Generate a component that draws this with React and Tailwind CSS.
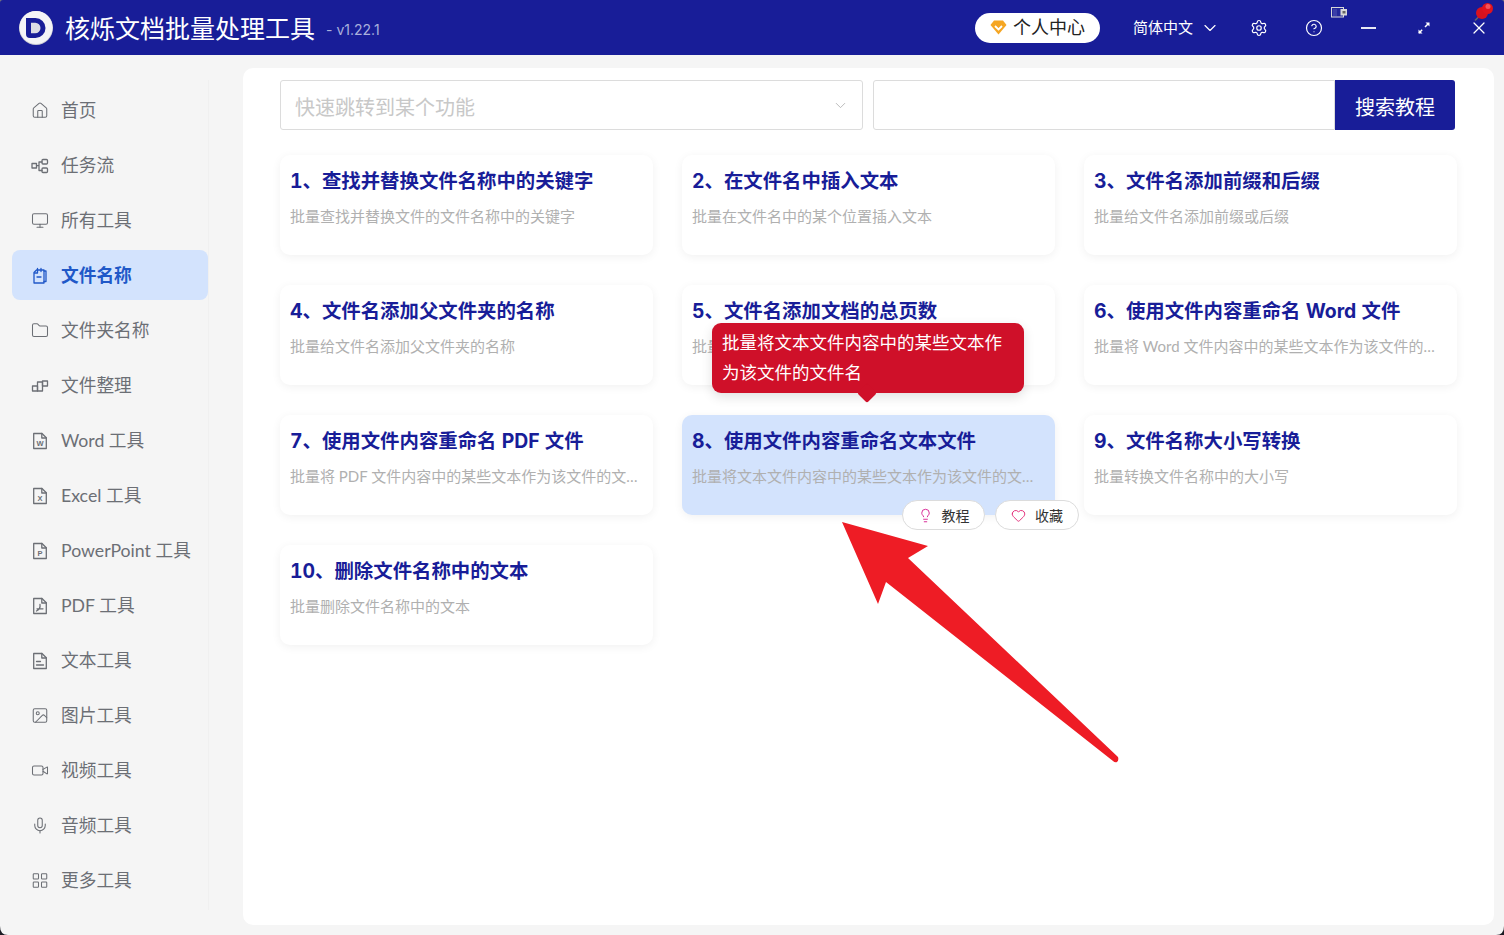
import React from "react";
import { Home, Monitor, Folder, Image as ImageIcon, Video, Mic, LayoutGrid, Settings, CircleHelp, X, ChevronDown, Heart, Lightbulb } from "lucide-react";

const Ic = ({ children }) => (
  <svg width="18" height="18" viewBox="0 0 18 18" fill="none" stroke="currentColor" strokeWidth="1.3" strokeLinejoin="round" strokeLinecap="round">{children}</svg>
);

const Flow = () => (
  <Ic>
    <rect x="1" y="6.500" width="4.500" height="4.500" />
    <rect x="11" y="2.500" width="5.500" height="4.500" rx="1" />
    <rect x="11" y="11" width="5.500" height="4.500" rx="1" />
    <path d="M5.500 8.700h2.500M8 5v8.500M8 5h3M8 13.500h3" />
  </Ic>
);
const Names = () => (
  <Ic>
    <path d="M5.500 3h7.500v13H3V5.500z" />
    <path d="M6.500 1.500v4.500h-3M10 1.500v3M13 4h2v10.500h-2M6 10h4" />
  </Ic>
);
const Arrange = () => (
  <Ic>
    <rect x="1.500" y="9" width="5" height="5" />
    <rect x="6.500" y="5" width="5" height="9" />
    <rect x="11.500" y="4" width="5" height="5" />
  </Ic>
);
const Doc = ({ children }) => (
  <Ic>
    <path d="M2.700 1.500h8.300l4.300 4.300v10.700h-12.600z" />
    <path d="M10.800 1.500v4.500h4.500" />
    {children}
  </Ic>
);
const Letter = ({ c }) => (
  <text x="9" y="13.700" textAnchor="middle" fontSize="7.500" fontWeight="700" fill="currentColor" stroke="none" fontFamily="Liberation Sans, sans-serif">{c}</text>
);

const lu = { size: 19, strokeWidth: 1.4 };
const nav = [
  ["首页", <Home {...lu} />],
  ["任务流", <Flow />],
  ["所有工具", <Monitor {...lu} />],
  ["文件名称", <Names />, true],
  ["文件夹名称", <Folder {...lu} />],
  ["文件整理", <Arrange />],
  ["Word 工具", <Doc><Letter c="W" /></Doc>],
  ["Excel 工具", <Doc><Letter c="X" /></Doc>],
  ["PowerPoint 工具", <Doc><Letter c="P" /></Doc>],
  ["PDF 工具", <Doc><path d="M9 7.500c.5 3-1.500 5.500-3.500 6.500M6 11.800h6" /></Doc>],
  ["文本工具", <Doc><path d="M5.500 9.500h4M5.500 13h7" /></Doc>],
  ["图片工具", <ImageIcon {...lu} />],
  ["视频工具", <Video {...lu} />],
  ["音频工具", <Mic {...lu} />],
  ["更多工具", <LayoutGrid {...lu} />],
];

const cards = [
  ["1、查找并替换文件名称中的关键字", "批量查找并替换文件的文件名称中的关键字"],
  ["2、在文件名中插入文本", "批量在文件名中的某个位置插入文本"],
  ["3、文件名添加前缀和后缀", "批量给文件名添加前缀或后缀"],
  ["4、文件名添加父文件夹的名称", "批量给文件名添加父文件夹的名称"],
  ["5、文件名添加文档的总页数", "批量给文件名添加文档的总页数"],
  ["6、使用文件内容重命名 Word 文件", "批量将 Word 文件内容中的某些文本作为该文件的文件名"],
  ["7、使用文件内容重命名 PDF 文件", "批量将 PDF 文件内容中的某些文本作为该文件的文件名"],
  ["8、使用文件内容重命名文本文件", "批量将文本文件内容中的某些文本作为该文件的文件名", true],
  ["9、文件名称大小写转换", "批量转换文件名称中的大小写"],
  ["10、删除文件名称中的文本", "批量删除文件名称中的文本"],
];

const Pill = ({ icon, label, w }) => (
  <div className={`flex h-[30px] ${w} items-center justify-center gap-[9px] rounded-full border border-[#dcdcdc] bg-white text-[14px] text-[#333]`}>
    {icon}
    <span>{label}</span>
  </div>
);

const Card = ({ title, desc, hot }) => (
  <div className={`relative h-[100px] min-w-0 rounded-[10px] pl-[10px] pr-[13px] pt-[11px] shadow-[0_2px_10px_rgba(0,0,0,0.06)] ${hot ? "bg-[#d3e3fd]" : "bg-white"}`}>
    <div className="h-[30px] truncate text-[19.4px] font-bold leading-[30px] text-[#181d98] tabular-nums">{title}</div>
    <div className="mt-[10px] truncate font-['Lato','Noto_Sans_CJK_SC',sans-serif] text-[15px] leading-[20px] text-[#b0b0b0]">{desc}</div>
    {hot && (
      <>
        <div className="absolute bottom-[122px] left-[30px] z-10 w-[312px] rounded-[9px] bg-[#cf1029] px-[10px] py-[5px] text-[17.5px] leading-[30px] text-white shadow-[0_4px_12px_rgba(0,0,0,0.12)]">
          批量将文本文件内容中的某些文本作为该文件的文件名
          <span className="absolute -bottom-[7px] left-[148px] h-[14px] w-[14px] rotate-45 rounded-[2px] bg-[#cf1029]" />
        </div>
        <div className="absolute left-[220px] top-[85px] z-10 flex gap-[10px]">
          <Pill w="w-[83px]" label="教程" icon={<Lightbulb size={15} strokeWidth={1.4} className="text-[#d4148c]" />} />
          <Pill w="w-[84px]" label="收藏" icon={<Heart size={15} strokeWidth={1.4} className="text-[#e0186c]" />} />
        </div>
      </>
    )}
  </div>
);

export default function App() {
  return (
    <div className="relative flex h-[935px] w-[1504px] flex-col overflow-hidden bg-[#f5f5f5] font-['Inter','Noto_Sans_CJK_SC',sans-serif]">
      <header className="flex h-[55px] shrink-0 items-center bg-[#181d98] text-white">
        <svg className="ml-[19px]" width="34" height="34" viewBox="0 0 34 34">
          <circle cx="17" cy="17" r="17" fill="#c9c9d2" />
          <circle cx="17" cy="16.500" r="16.500" fill="#f4f4f7" />
          <path d="M7 7h9.500a10 10 0 0 1 0 20h-5.500a4 4 0 0 1-4-4z" fill="#181d98" />
          <path d="M12 11.700h4.200a5.300 5.300 0 0 1 0 10.600h-4.200z" fill="#dcdce4" />
        </svg>
        <span className="ml-[12px] pt-[4px] text-[25px] leading-none">核烁文档批量处理工具</span>
        <span className="ml-[11px] mt-[3px] text-[14px] text-[#a9b0dc]">- v1.22.1</span>
        <div className="ml-auto flex items-center">
          <div className="mr-[1px] flex h-[30px] w-[125px] items-center justify-center gap-[6px] rounded-full bg-white text-[18px] text-[#222]">
            <svg width="17" height="15" viewBox="0 0 17 15"><path d="M4 .5h9l3.500 4.500-8 9.500-8-9.500z" fill="#f5a623" /><path d="M5 6l3.500 3.500L12 6" fill="none" stroke="#fff" strokeWidth="1.800" /></svg>
            <span>个人中心</span>
          </div>
          <span className="ml-[32px] pt-[1px] text-[15px]">简体中文</span>
          <ChevronDown size={20} strokeWidth={1.4} className="ml-[7px]" />
          <div className="ml-[11px] flex w-[55px] justify-center"><Settings size={18} strokeWidth={1.6} /></div>
          <div className="flex w-[55px] justify-center"><CircleHelp size={18} strokeWidth={1.6} /></div>
          <div className="flex w-[55px] justify-center"><span className="h-[2px] w-[15px] bg-[#e8e8f4]" /></div>
          <div className="flex w-[55px] justify-center">
            <svg width="16" height="16" viewBox="0 0 16 16" fill="none" stroke="#fff" strokeWidth="1.500"><path d="M3 13L13 3" strokeDasharray="4.500 4" /><path d="M9.500 2.500h4v4zM6.500 13.500h-4v-4z" fill="#fff" stroke="none" /></svg>
          </div>
          <div className="mr-[-2px] flex w-[55px] justify-center"><X size={20} strokeWidth={1.5} /></div>
        </div>
      </header>

      <div className="flex min-h-0 flex-1">
        <aside className="w-[209px] shrink-0 pl-[12px] pt-[25px]">
          <nav className="flex h-[830px] flex-col border-r border-[#f0f0f0] pt-[5px] font-['Lato','Noto_Sans_CJK_SC',sans-serif]">
            {nav.map(([label, icon, active]) => (
              <div key={label} className={`mb-[5px] flex h-[50px] shrink-0 items-center rounded-[8px] pl-[19px] text-[17.7px] ${active ? "bg-[#d3e3fd] font-bold text-[#2058c8]" : "text-[#6c6f75]"}`}>
                <span className="flex w-[18px] justify-center pt-[1px]">{icon}</span>
                <span className="ml-[12px] whitespace-nowrap pt-[3px]">{label}</span>
              </div>
            ))}
          </nav>
        </aside>

        <main className="ml-[34px] mt-[13px] mb-[10px] mr-[10px] min-w-0 flex-1 rounded-[10px] bg-white pl-[37px] pr-[39px] pt-[12px]">
          <div className="flex h-[50px]">
            <div className="flex w-[583px] items-center justify-between rounded-[3px] border border-[#dcdcdc] pl-[14px] pr-[13px] text-[20px] text-[#c8c8c8]">
              <span className="pt-[5px]">快速跳转到某个功能</span>
              <ChevronDown size={17} strokeWidth={1.2} className="text-[#b0b0b0]" />
            </div>
            <div className="ml-[10px] flex-1 rounded-l-[3px] border border-[#dcdcdc]" />
            <div className="flex w-[120px] items-center justify-center rounded-r-[3px] bg-[#181d98] pt-[5px] text-[20px] text-white">搜索教程</div>
          </div>
          <div className="mt-[25px] grid w-[1177px] grid-cols-[repeat(3,373px)] gap-x-[29px] gap-y-[30px]">
            {cards.map(([t, d, h]) => <Card key={t} title={t} desc={d} hot={h} />)}
          </div>
        </main>
      </div>

      {/* window widgets and annotation lying over the page */}
      <svg className="absolute left-[1331px] top-[7px]" width="17" height="12" viewBox="0 0 17 12">
        <rect x=".5" y=".5" width="12" height="9.500" fill="#23279a" stroke="#d8d8d8" />
        <rect x="2" y="2" width="4" height="7" fill="#3a3ea8" />
        <rect x="9.500" y="2" width="6.500" height="6.500" fill="#d8d8d8" />
        <rect x="11.500" y="4" width="3" height="2.500" fill="#666" />
      </svg>
      <svg className="absolute left-[1473px] top-[1px]" width="22" height="22" viewBox="0 0 22 22">
        <path d="M2 19.500l4-4" stroke="#666" strokeWidth="1.500" />
        <circle cx="9" cy="12" r="6" fill="#d9121e" />
        <circle cx="14.500" cy="7.500" r="5.500" fill="#e0131f" />
        <circle cx="15" cy="5.500" r="2.500" fill="#f4525a" />
      </svg>
      <svg className="pointer-events-none absolute left-0 top-0 z-20" width="1504" height="935" viewBox="0 0 1504 935">
        <path d="M842 522L928 546L908 558L1118 757Q1119 760 1117 762Q1115 763 1113 761L886 582L878 604Z" fill="#ee1c25" />
        <path d="M0 926Q0 935 8 935H0Z" fill="#1c1c24" />
        <path d="M1504 926Q1504 935 1496 935H1504Z" fill="#1c1c24" />
        <path d="M0 3Q0 0 3 0H0Z" fill="#77777f" />
        <path d="M1504 3Q1504 0 1501 0H1504Z" fill="#77777f" />
      </svg>
    </div>
  );
}
